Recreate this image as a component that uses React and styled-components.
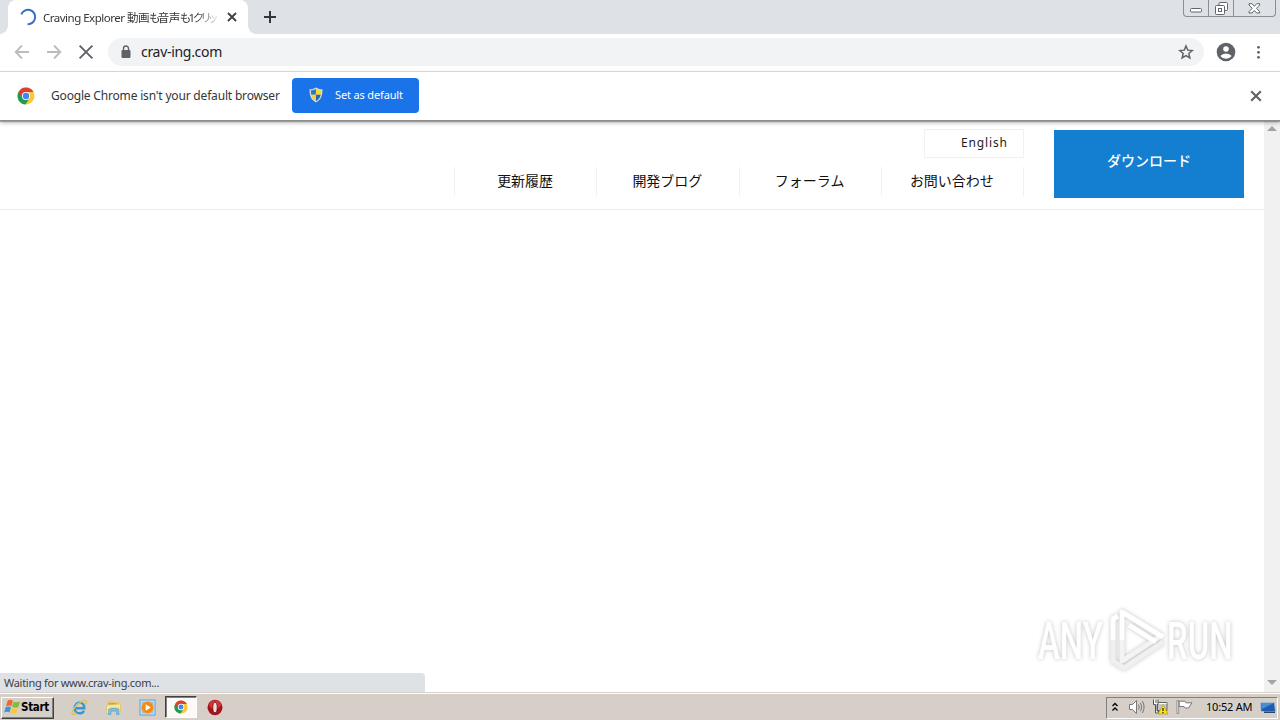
import styled, { createGlobalStyle, css } from "styled-components";

const GlobalStyle = createGlobalStyle`
    * {
        box-sizing: border-box;
    }
    body {
        margin: 0;
        overflow: hidden;
        background: white;
        font-family: "Noto Sans", "Noto Sans CJK JP", sans-serif;
    }
    svg {
        display: block;
        flex: none;
    }
`;

const Screen = styled.div`
    position: relative;
    display: flex;
    flex-direction: column;
    width: 1280px;
    height: 720px;
    overflow: hidden;
`;

const Label = styled.span`
    flex: none;
    white-space: nowrap;
    font-size: ${({ $size }) => $size || 12}px;
    line-height: 16px;
    letter-spacing: ${({ $spacing }) => $spacing || 0}px;
    color: ${({ $color }) => $color || "#333639"};
`;

const Kana = styled.span`
    font-feature-settings: "palt";
    letter-spacing: -2.1px;
`;

const TabStrip = styled.div`
    display: flex;
    justify-content: space-between;
    height: 34px;
    flex: none;
    padding-left: 8px;
    background: #dee1e6;
`;

const TabGroup = styled.div`
    display: flex;
    align-items: center;
    gap: 15px;
`;

const Tab = styled.div`
    position: relative;
    display: flex;
    align-items: center;
    width: 240px;
    height: 34px;
    padding: 0 9px 0 11px;
    border-radius: 8px 8px 0 0;
    background: white;
    &::before, &::after {
        content: "";
        position: absolute;
        bottom: 0;
        width: 8px;
        height: 8px;
    }
    &::before {
        left: -8px;
        background: radial-gradient(circle at 0 0, transparent 7.5px, white 8px);
    }
    &::after {
        right: -8px;
        background: radial-gradient(circle at 100% 0, transparent 7.5px, white 8px);
    }
`;

const TabTitle = styled.div`
    display: flex;
    align-items: center;
    width: 176px;
    height: 20px;
    margin: 0 8px 0 6px;
    padding-top: 1px;
    mask-image: linear-gradient(to right, black 152px, transparent 178px);
`;

const WindowButtons = styled.div`
    display: flex;
    width: 93px;
    height: 17px;
    margin-right: 4px;
    border: 1px solid #8b8e94;
    border-top: none;
    border-radius: 0 0 4px 4px;
`;

const WindowButton = styled.div`
    display: flex;
    align-items: center;
    justify-content: center;
    width: ${({ $width }) => $width}px;
    padding-top: ${({ $drop }) => $drop || 0}px;
    border-right: ${({ $last }) => ($last ? "none" : "1px solid #8b8e94")};
`;

const Toolbar = styled.div`
    display: flex;
    align-items: center;
    height: 38px;
    flex: none;
    padding: 0 14px 1px 14px;
    background: white;
    border-bottom: 1px solid #dadce0;
`;

const NavButtons = styled.div`
    display: flex;
    align-items: center;
    gap: 16px;
    margin-right: 14px;
`;

const AddressBar = styled.div`
    display: flex;
    align-items: center;
    width: 1096px;
    height: 28px;
    padding: 0 10px;
    margin-right: 12px;
    border-radius: 14px;
    background: #f1f3f4;
`;

const Host = styled(Label)`
    flex: 1;
    margin-left: 7px;
`;

const InfoBar = styled.div`
    position: relative;
    z-index: 2;
    display: flex;
    align-items: center;
    height: 49px;
    flex: none;
    padding: 0 18px 0 17px;
    background: white;
    border-bottom: 1px solid #8e8e8e;
    box-shadow: 0 1px 1px rgba(0, 0, 0, .25), 0 2px 4px rgba(0, 0, 0, .25);
`;

const InfoText = styled(Label)`
    width: 241px;
    margin-left: 16px;
`;

const DefaultButton = styled.div`
    display: flex;
    align-items: center;
    gap: 11px;
    width: 127px;
    height: 35px;
    margin: 0 auto 2px 0;
    padding-left: 16px;
    border-radius: 4px;
    background: #1a73e8;
`;

const PageArea = styled.div`
    display: flex;
    flex: 1;
    background: white;
`;

const Site = styled.div`
    flex: 1;
`;

const SiteHeader = styled.div`
    display: flex;
    justify-content: flex-end;
    gap: 30px;
    height: 89px;
    padding: 9px 20px 0 0;
    border-bottom: 1px solid #ebebeb;
`;

const HeaderMenu = styled.div`
    display: flex;
    flex-direction: column;
    align-items: flex-end;
    gap: 9px;
    width: 570px;
    margin-top: -1px;
`;

const Language = styled.div`
    width: 100px;
    height: 29px;
    padding: 5px 0 0 36px;
    border: 1px solid #f1f1f1;
    line-height: 16px;
    font-size: 0;
`;

const MenuRow = styled.div`
    display: flex;
    width: 570px;
    height: 29px;
    border-left: 1px solid #f0f0f0;
`;

const MenuItem = styled.div`
    flex: 1;
    height: 29px;
    padding-right: 1px;
    border-right: 1px solid #f0f0f0;
    color: #111;
    font-family: "Noto Sans CJK JP", sans-serif;
    font-size: 14px;
    line-height: 27px;
    text-align: center;
    white-space: nowrap;
`;

const Download = styled.div`
    width: 190px;
    height: 68px;
    background: #147fd0;
    color: white;
    font-family: "Noto Sans CJK JP", sans-serif;
    font-size: 14px;
    font-weight: 500;
    line-height: 61px;
    text-align: center;
`;

const Scrollbar = styled.div`
    display: flex;
    flex-direction: column;
    align-items: center;
    justify-content: space-between;
    width: 16px;
    padding: 5px 0 7px;
    background: #f1f1f1;
`;

const Arrow = styled.div`
    width: 0;
    border: 5px solid transparent;
    ${({ $down }) => $down
        ? css`border-top-color: #a3a3a3; border-bottom: none;`
        : css`border-bottom-color: #a3a3a3; border-top: none;`}
`;

const StatusBubble = styled.div`
    position: absolute;
    left: 0;
    bottom: 28px;
    width: 425px;
    height: 19px;
    padding: 2px 0 0 4px;
    border-top-right-radius: 4px;
    background: #dee1e6;
    line-height: 16px;
    font-size: 0;
`;

const Watermark = styled.svg`
    position: absolute;
    left: 1028px;
    top: 600px;
    filter: drop-shadow(0 0 2px rgba(0, 0, 0, .24));
`;

const Taskbar = styled.div`
    display: flex;
    align-items: center;
    height: 28px;
    flex: none;
    padding: 3px 2px 1px 1px;
    background: #d6cfc7;
    border-top: 1px solid #d6cfc7;
    box-shadow: inset 0 1px white;
`;

const StartButton = styled.div`
    display: flex;
    align-items: center;
    width: 53px;
    height: 22px;
    padding: 0 0 2px 2px;
    border: 1px solid;
    border-color: white #404040 #404040 white;
    box-shadow: inset -1px -1px #808080;
`;

const StartText = styled.span`
    color: black;
    font-family: "DejaVu Sans Condensed", "DejaVu Sans", sans-serif;
    font-stretch: condensed;
    font-size: 11.5px;
    font-weight: bold;
    letter-spacing: -.3px;
`;

const QuickLaunch = styled.div`
    display: flex;
    align-items: center;
    margin: 0 auto 1px 8px;
`;

const TaskIcon = styled.div`
    display: flex;
    align-items: center;
    justify-content: center;
    width: 34px;
    height: 22px;
    ${({ $active }) => $active && css`
        width: 32px;
        margin: 0 1px;
        border: 1px solid;
        border-color: #404040 white white #404040;
        box-shadow: inset 1px 1px #808080;
        background: #fbfaf9;
    `}
`;

const Tray = styled.div`
    display: flex;
    align-items: center;
    width: 172px;
    height: 22px;
    padding: 0 2px 1px 4px;
    border: 1px solid;
    border-color: #808080 white white #808080;
`;

const TrayIcons = styled.div`
    display: flex;
    gap: 7px;
    margin-left: 9px;
`;

const Clock = styled(Label)`
    width: 47px;
    margin: 0 7px 0 13px;
`;

const CloseIcon = ({ size = 10, color = "#5f6368", width = 1.8 }) => (
    <svg width={size} height={size} viewBox="0 0 10 10" stroke={color} strokeWidth={width}>
        <path d="M1 1l8 8M9 1l-8 8" />
    </svg>
);

const ArrowIcon = ({ right }) => (
    <svg width="16" height="16" viewBox="0 0 16 16" fill="none" stroke="#babcbe" strokeWidth="1.8">
        <path d={right ? "M1 8h13M8 1.5L14.3 8 8 14.5" : "M15 8H2M8 1.5L1.7 8 8 14.5"} />
    </svg>
);

const ChromeIcon = ({ size }) => (
    <svg width={size} height={size} viewBox="0 0 18 18">
        <circle cx="9" cy="9" r="8.5" fill="#fbc935" />
        <path d="M9 9L1.500 5A8.500 8.500 0 0 0 8.500 17.500L12.600 11z" fill="#209b56" />
        <path d="M9 9L4.800 10.800 1.600 4.800A8.500 8.500 0 0 1 16.500 5H9z" fill="#dc4034" />
        <circle cx="9" cy="9" r="4.1" fill="white" />
        <circle cx="9" cy="9" r="3.2" fill="#4285f4" />
    </svg>
);

const ShieldIcon = () => (
    <svg width="16" height="16" viewBox="0 0 16 16">
        <path d="M8 .5C6 1.8 3.7 2.3 1.5 2.3c0 6 1 10.5 6.5 13.2 5.500-2.700 6.500-7.200 6.500-13.200C12.300 2.300 10 1.800 8 .5z" fill="#d8dbc9" />
        <path d="M7.900 2C6.400 2.900 4.800 3.300 2.900 3.400c0 1.700.1 3.100.4 4.400h4.600z" fill="#2b73cf" />
        <path d="M8 2c1.500.9 3.200 1.300 5.100 1.400 0 1.700-.1 3.100-.4 4.400H8z" fill="#fcd535" />
        <path d="M3.300 7.800H8v6.300C5.500 12.700 4 11 3.300 7.800z" fill="#f9d12c" />
        <path d="M12.700 7.800H8v6.300c2.500-1.400 4-3.100 4.700-6.300z" fill="#2368b9" />
    </svg>
);

const WindowsIcon = () => (
    <svg width="17" height="16" viewBox="0 0 17 16">
        <path d="M3.700 1.600c1.900-1.300 3.800-.8 5.200.2L7.300 7.300C5.700 6.300 4 6.200 2 7.200z" fill="#ee6a2c" />
        <path d="M9.500 2.400c1.800 1.100 3.900 1.200 6.500.1l-1.700 5.400c-2.100 1-4.100.9-6.200-.2z" fill="#80bd3a" />
        <path d="M1.700 8.200c1.900-1.200 3.700-.9 5.300.1l-1.500 5.200c-1.500-1-3.400-1.200-5.400-.1z" fill="#3d94dd" />
        <path d="M7.800 8.700c1.800 1.100 4.100 1.100 6.200.2l-1.600 5.200c-2 1.100-4.100 1-6.100-.2z" fill="#fbc93a" />
    </svg>
);

const IeIcon = () => (
    <svg width="17" height="17" viewBox="0 0 17 17" fill="none">
        <path d="M3.500 9.300h9.800c.2-3.400-1.700-5.700-4.700-5.700S3.700 6 3.700 9.200s2 5.100 4.900 5.100c2.100 0 3.600-.9 4.300-2.600" stroke="#3398d4" strokeWidth="2.400" />
        <path d="M4 8.300C4.500 5.500 6.200 4 8.600 4" stroke="#8bd1f0" strokeWidth="1" />
        <path d="M14.200 5.600C17 1.700 15 .3 10.700 2.700 5.300 5.700.3 12 1.100 14.500c.5 1.400 2.600.8 4.700-.4" stroke="#e5be50" strokeWidth="1.300" />
    </svg>
);

const FolderIcon = () => (
    <svg width="17" height="17" viewBox="0 0 17 17">
        <path d="M2 2.500l5-1 1.500 1.500 6-.5V13H2z" fill="#e9c96f" />
        <path d="M3.500 4h8v2h-8z" fill="#8cbd61" />
        <path d="M1.500 6l14-1v9l-2 1V9H5v6l-3.500-.7z" fill="#f7e6a0" stroke="#dabb60" strokeWidth=".6" />
        <path d="M3.500 10.500q5-2.500 10.500 0V15.500h-2.500v-3.500H6v3.500H3.500z" fill="#82c1e5" stroke="#529dca" strokeWidth=".6" />
    </svg>
);

const MediaIcon = () => (
    <svg width="17" height="17" viewBox="0 0 17 17">
        <rect x="1" y="1" width="15" height="15" fill="#d7ebfa" stroke="#5d9dd0" />
        <rect x="2.500" y="2.500" width="12" height="12" fill="#8cc4ee" />
        <circle cx="8.500" cy="8.500" r="6" fill="#f38a13" stroke="#f9b764" strokeWidth=".6" />
        <path d="M6.700 5.300l5.200 3.200-5.200 3.200z" fill="white" />
    </svg>
);

const OperaIcon = () => (
    <svg width="16" height="17" viewBox="0 0 16 17">
        <ellipse cx="8" cy="8.500" rx="7.500" ry="7.700" fill="#a81218" />
        <ellipse cx="8" cy="5.500" rx="5.800" ry="4.300" fill="#cf3838" />
        <ellipse cx="8" cy="8.500" rx="2.200" ry="5.300" fill="#efdfdc" stroke="#730407" strokeWidth=".8" />
    </svg>
);

const SpeakerIcon = () => (
    <svg width="17" height="16" viewBox="0 0 17 16" fill="none" stroke="#777">
        <path d="M1.500 5.500h3l4-4v13l-4-4h-3z" fill="white" />
        <path d="M10.500 5.500q1.500 2.500 0 5M12.500 3.800q2.600 4.200 0 8.400M14.400 2q3.400 6 0 12" />
    </svg>
);

const NetworkIcon = () => (
    <svg width="17" height="16" viewBox="0 0 17 16" fill="none">
        <path d="M5.500 3.500h9.500v8H5.500z" fill="#c5c8c9" stroke="#666" />
        <path d="M6.500 4.500h8" stroke="white" />
        <path d="M1.500.5v5h2v8.500h3v-2H5V5.500h1v-5M4 .5v3.500" fill="white" stroke="#505050" />
        <path d="M11 5.700l5 9.300H6z" fill="#fde317" stroke="#b99b00" strokeWidth=".7" />
        <path d="M11 9v3M11 13v1.200" stroke="#332b00" strokeWidth="1.300" />
    </svg>
);

const FlagIcon = () => (
    <svg width="17" height="16" viewBox="0 0 17 16">
        <path d="M1 1.500h1.700V14.500H1z" fill="white" stroke="#777" strokeWidth=".8" />
        <path d="M3.200 2.200h5.800l1 1.600h6l-2 3L12.500 9H9.200L8 7.500H3.200z" fill="white" stroke="#777" />
    </svg>
);

const DesktopIcon = () => (
    <svg width="16" height="16" viewBox="0 0 16 16">
        <path d="M.5 3.500h14l1 9H1z" fill="#1c5baf" stroke="#b7cde0" strokeWidth=".7" />
        <path d="M1 4h13L2 10z" fill="#4a8ed2" />
        <path d="M4 12.500h11V14H4z" fill="#29456b" />
    </svg>
);

const MENU = ["更新履歴", "開発ブログ", "フォーラム", "お問い合わせ"];

const Browser = () => (
    <>
        <TabStrip>
            <TabGroup>
                <Tab>
                    <svg width="18" height="18" viewBox="0 0 18 18" fill="none" stroke="#3670c6" strokeWidth="2">
                        <path d="M2.300 6.300A7.200 7.200 0 1 1 8.600 16.200" />
                    </svg>
                    <TabTitle>
                        <Label $size={11.5} $spacing={-0.5}>
                            Craving Explorer 動画<Kana>も</Kana>音声<Kana>も1クリッ</Kana>
                        </Label>
                    </TabTitle>
                    <CloseIcon size={10} color="#3c4043" />
                </Tab>
                <svg width="14" height="14" viewBox="0 0 14 14" stroke="#33363a" strokeWidth="2">
                    <path d="M7 1v12M1 7h12" />
                </svg>
            </TabGroup>
            <WindowButtons>
                <WindowButton $width={25} $drop={5}>
                    <svg width="13" height="5" viewBox="0 0 13 5"><rect x=".5" y=".5" width="11" height="3.500" rx="1" fill="white" stroke="#62656b" /></svg>
                </WindowButton>
                <WindowButton $width={25}>
                    <svg width="13" height="13" viewBox="0 0 13 13" fill="white" stroke="#62656b">
                        <rect x="4" y=".5" width="8.500" height="8" rx="1" />
                        <rect x=".5" y="3.500" width="9" height="9" rx="1" />
                        <rect x="3.500" y="6.500" width="3" height="3" />
                    </svg>
                </WindowButton>
                <WindowButton $width={41} $last>
                    <svg width="13" height="11" viewBox="0 0 13 11" fill="white" stroke="#62656b">
                        <path d="M1 .7h3l2.300 2.600L8.700.7h3v1.300L8.500 5.300l3.200 3.400V10h-3L6.300 7.500 4 10H1V8.700l3.200-3.400L1 2z" />
                    </svg>
                </WindowButton>
            </WindowButtons>
        </TabStrip>
        <Toolbar>
            <NavButtons>
                <ArrowIcon />
                <ArrowIcon right />
                <CloseIcon size={16} width={1.2} />
            </NavButtons>
            <AddressBar>
                <svg width="16" height="16" viewBox="0 0 16 16">
                    <rect x="3.500" y="6" width="9" height="8" rx="1" fill="#5f6368" />
                    <path d="M5.500 6.500V4.500a2.500 2.500 0 0 1 5 0v2" fill="none" stroke="#5f6368" strokeWidth="1.400" />
                </svg>
                <Host $size={14} $spacing={-0.3} $color="#202124">crav-ing.com</Host>
                <svg width="16" height="16" viewBox="0 0 24 24" fill="none" stroke="#5f6368" strokeWidth="2.200">
                    <path d="M12 3l2.600 6.200 6.700.6-5.100 4.400 1.600 6.600L12 17.300l-5.800 3.500 1.600-6.600-5.100-4.400 6.700-.6z" />
                </svg>
            </AddressBar>
            <svg width="20" height="20" viewBox="0 0 20 20">
                <circle cx="10" cy="10" r="9.300" fill="#5f6368" />
                <circle cx="10" cy="7" r="2.800" fill="white" />
                <path d="M4.300 14q2-2.500 5.700-2.500t5.700 2.500Q13.700 16.700 10 16.700T4.300 14z" fill="white" />
            </svg>
            <svg width="24" height="16" viewBox="0 0 24 16" fill="#5f6368">
                <circle cx="22.500" cy="3.300" r="1.400" />
                <circle cx="22.500" cy="8.300" r="1.400" />
                <circle cx="22.500" cy="13.300" r="1.400" />
            </svg>
        </Toolbar>
        <InfoBar>
            <ChromeIcon size={18} />
            <InfoText $size={12} $spacing={-0.18}>Google Chrome isn't your default browser</InfoText>
            <DefaultButton>
                <ShieldIcon />
                <Label $size={11} $spacing={-0.15} $color="white">Set as default</Label>
            </DefaultButton>
            <CloseIcon size={12} />
        </InfoBar>
    </>
);

const Website = () => (
    <PageArea>
        <Site>
            <SiteHeader>
                <HeaderMenu>
                    <Language>
                        <Label $size={12} $spacing={0.85} $color="#1b1b1b">English</Label>
                    </Language>
                    <MenuRow>
                        {MENU.map((item) => <MenuItem key={item}>{item}</MenuItem>)}
                    </MenuRow>
                </HeaderMenu>
                <Download>ダウンロード</Download>
            </SiteHeader>
        </Site>
        <Scrollbar>
            <Arrow />
            <Arrow $down />
        </Scrollbar>
    </PageArea>
);

const AnyRun = () => (
    <Watermark width="216" height="84" viewBox="0 0 216 84">
        <defs>
            <linearGradient id="fade" x1="0" y1="22" x2="0" y2="60" gradientUnits="userSpaceOnUse">
                <stop offset=".5" stopColor="white" />
                <stop offset=".52" stopColor="#efefef" />
                <stop offset="1" stopColor="#f2f2f2" />
            </linearGradient>
        </defs>
        <g fill="url(#fade)" fontFamily="Roboto, sans-serif" fontWeight="500" fontSize="51">
            <text transform="translate(10 59) scale(.645 1)">ANY</text>
            <text transform="translate(139 59) scale(.645 1)">RUN</text>
        </g>
        <g fill="none" strokeWidth="5" strokeLinejoin="round">
            <path d="M135 42L96 68l-11-7V40" stroke="#f0f0f0" />
            <path d="M85 40V19l5-3" stroke="white" />
            <path d="M94 40v21l37-24" stroke="#f3f3f3" />
            <path d="M94 40V12l41 25M101 25l27 17" stroke="white" />
        </g>
    </Watermark>
);

const SystemBar = () => (
    <Taskbar>
        <StartButton>
            <WindowsIcon />
            <StartText>Start</StartText>
        </StartButton>
        <QuickLaunch>
            <TaskIcon><IeIcon /></TaskIcon>
            <TaskIcon><FolderIcon /></TaskIcon>
            <TaskIcon><MediaIcon /></TaskIcon>
            <TaskIcon $active><ChromeIcon size={14} /></TaskIcon>
            <TaskIcon><OperaIcon /></TaskIcon>
        </QuickLaunch>
        <Tray>
            <svg width="8" height="10" viewBox="0 0 8 10" fill="none" stroke="black" strokeWidth="1.300">
                <path d="M1.500 4L4 1.500 6.500 4M1.500 8.500L4 6l2.500 2.500" />
            </svg>
            <TrayIcons>
                <SpeakerIcon />
                <NetworkIcon />
                <FlagIcon />
            </TrayIcons>
            <Clock $size={11} $color="black" $spacing={-0.2}>10:52 AM</Clock>
            <DesktopIcon />
        </Tray>
    </Taskbar>
);

export default function App() {
    return (
        <Screen>
            <GlobalStyle />
            <Browser />
            <Website />
            <StatusBubble>
                <Label $size={11} $spacing={-0.28} $color="#3c4043">Waiting for www.crav-ing.com...</Label>
            </StatusBubble>
            <AnyRun />
            <SystemBar />
        </Screen>
    );
}
